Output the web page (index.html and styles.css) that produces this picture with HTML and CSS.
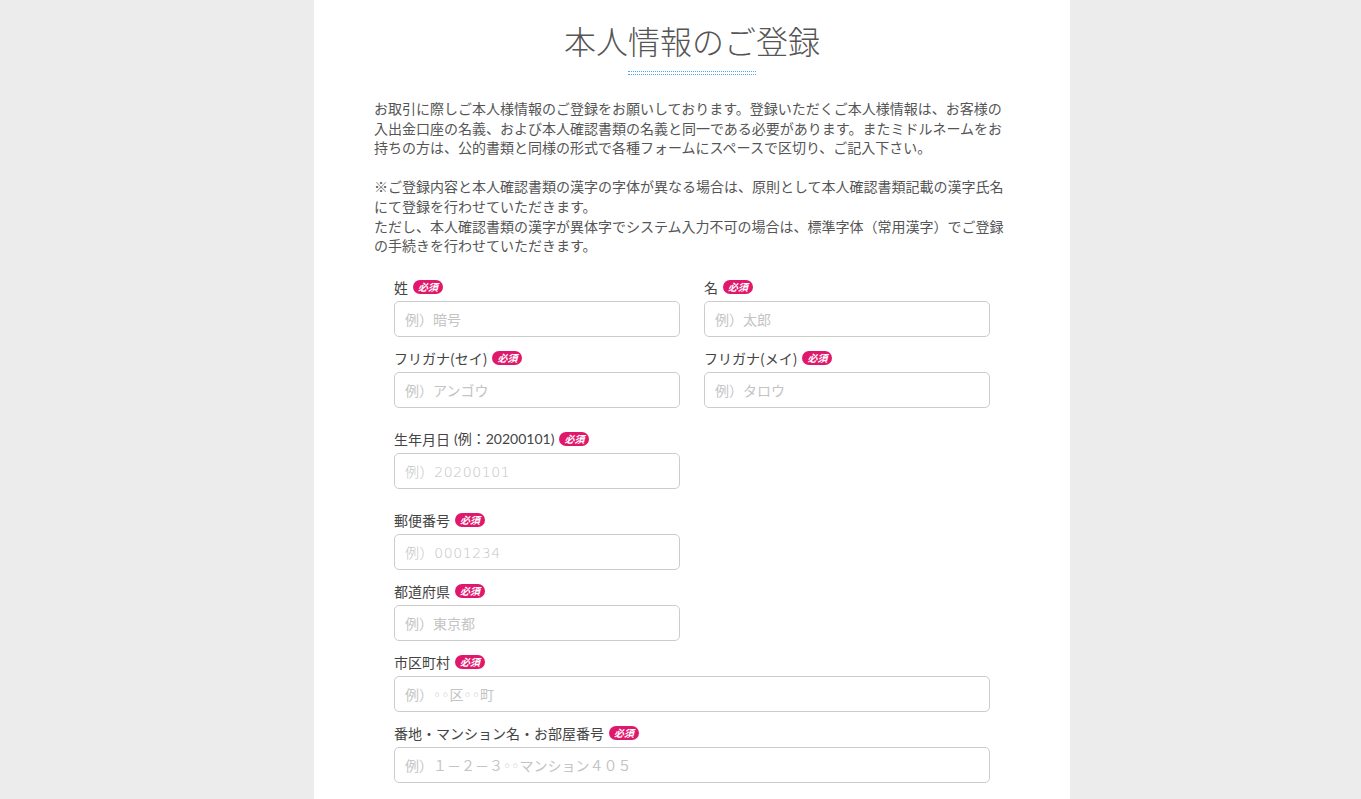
FILE: index.html
```html
<!DOCTYPE html>
<html lang="ja">
<head>
<meta charset="utf-8">
<title>本人情報のご登録</title>
<link rel="stylesheet" href="styles.css">
</head>
<body>
<main class="page">
  <h1 class="title">本人情報のご登録</h1>
  <div class="title-rule"></div>
  <p class="intro">お取引に際しご本人様情報のご登録をお願いしております。登録いただくご本人様情報は、お客様の入出金口座の名義、および本人確認書類の名義と同一である必要があります。またミドルネームをお持ちの方は、公的書類と同様の形式で各種フォームにスペースで区切り、ご記入下さい。<br><br>※ご登録内容と本人確認書類の漢字の字体が異なる場合は、原則として本人確認書類記載の漢字氏名にて登録を行わせていただきます。<br>ただし、本人確認書類の漢字が異体字でシステム入力不可の場合は、標準字体（常用漢字）でご登録の手続きを行わせていただきます。</p>

  <form class="form">
    <div class="row two">
      <div class="field">
        <label class="label">姓<span class="req">必須</span></label>
        <input class="input" type="text" placeholder="例）暗号">
      </div>
      <div class="field">
        <label class="label">名<span class="req">必須</span></label>
        <input class="input" type="text" placeholder="例）太郎">
      </div>
    </div>
    <div class="row two">
      <div class="field">
        <label class="label">フリガナ(セイ)<span class="req">必須</span></label>
        <input class="input" type="text" placeholder="例）アンゴウ">
      </div>
      <div class="field">
        <label class="label">フリガナ(メイ)<span class="req">必須</span></label>
        <input class="input" type="text" placeholder="例）タロウ">
      </div>
    </div>
    <div class="row two spaced">
      <div class="field">
        <label class="label">生年月日 <span class="num">(例：20200101)</span><span class="req">必須</span></label>
        <input class="input num-ph" type="text" placeholder="例）20200101">
      </div>
    </div>
    <div class="row two spaced">
      <div class="field">
        <label class="label">郵便番号<span class="req">必須</span></label>
        <input class="input num-ph" type="text" placeholder="例）0001234">
      </div>
    </div>
    <div class="row two">
      <div class="field">
        <label class="label">都道府県<span class="req">必須</span></label>
        <input class="input" type="text" placeholder="例）東京都">
      </div>
    </div>
    <div class="row">
      <div class="field">
        <label class="label">市区町村<span class="req">必須</span></label>
        <input class="input circ-ph" type="text" placeholder="例）◦◦区◦◦町">
      </div>
    </div>
    <div class="row">
      <div class="field">
        <label class="label">番地・マンション名・お部屋番号<span class="req">必須</span></label>
        <input class="input circ-ph" type="text" placeholder="例）１－２－３◦◦マンション４０５">
      </div>
    </div>
  </form>
</main>
</body>
</html>
```

FILE: styles.css
```css
html, body {
  margin: 0;
  padding: 0;
}

body {
  background: #ececec;
  font-family: "Noto Sans CJK JP", "Noto Sans", sans-serif;
  color: #555;
}

.page {
  box-sizing: border-box;
  width: 756px;
  margin-left: 314px;
  min-height: 100vh;
  background: #fff;
  padding: 17px 60px 40px;
}

.title {
  margin: 0;
  text-align: center;
  font-size: 32px;
  line-height: 46px;
  font-weight: 300;
  color: #555;
  letter-spacing: 0;
}

.title-rule {
  width: 128px;
  height: 2px;
  margin: 8px auto 0;
  border-top: 1px dotted #4ea6ee;
  border-bottom: 1px dotted #4ea6ee;
}

.intro {
  margin: 24px 0 0;
  font-size: 14px;
  line-height: 19.6px;
  color: #555;
}

.form {
  margin-top: 21px;
  padding: 0 20px;
}

.row {
  display: grid;
  grid-template-columns: 1fr;
  column-gap: 24px;
}

.row.two {
  grid-template-columns: 1fr 1fr;
}

.row.spaced {
  margin-top: 10px;
}

.field {
  margin-bottom: 11px;
}

.label {
  display: flex;
  align-items: center;
  height: 20px;
  margin-bottom: 4px;
  font-size: 14px;
  line-height: 20px;
  color: #444;
}

.num {
  font-family: "Lato", "Noto Sans CJK JP", sans-serif;
  margin-left: 4px;
}

.req {
  display: inline-block;
  margin-left: 5px;
  padding: 0 5px;
  height: 14px;
  line-height: 14px;
  border-radius: 7px;
  background: #e0186c;
  color: #fff;
  font-size: 10px;
  font-weight: 700;
  font-style: italic;
}

.input {
  display: block;
  box-sizing: border-box;
  width: 100%;
  height: 36px;
  margin: 0;
  padding: 0 10px;
  border: 1px solid #cccccc;
  border-radius: 5px;
  background: #fff;
  font-family: "Noto Sans CJK JP", "Noto Sans", sans-serif;
  font-size: 14px;
  color: #333;
  outline: none;
}

.input::placeholder {
  color: #c4c4c4;
}

.num-ph::placeholder {
  font-family: "DejaVu Sans", "Noto Sans CJK JP", sans-serif;
  font-weight: 300;
  letter-spacing: 0.6px;
}

.circ-ph::placeholder {
  font-family: "DejaVu Sans", "Noto Sans CJK JP", sans-serif;
}
```
